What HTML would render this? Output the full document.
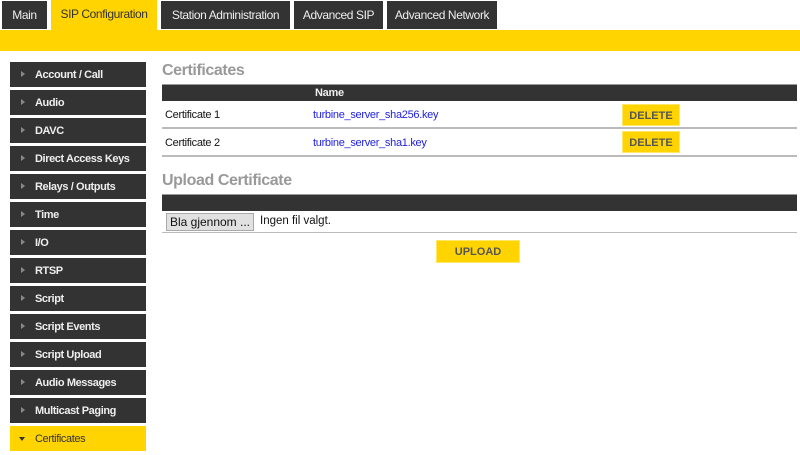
<!DOCTYPE html>
<html><head><style>
*{margin:0;padding:0;box-sizing:border-box}
body{width:800px;height:455px;background:#fff;font-family:"Liberation Sans",sans-serif;font-size:11px;letter-spacing:-0.3px;position:relative;overflow:hidden;color:#111}
.a{position:absolute}
.tab{position:absolute;top:1px;height:28px;background:#333;color:#eee;font-size:12px;line-height:29px;text-align:center;letter-spacing:-0.4px}
.tab.on{background:#ffd400;color:#333;top:0;height:30px;line-height:29px}
.side{position:absolute;left:10px;width:136px;height:25px;background:#333;color:#eee;font-weight:bold;font-size:11px;line-height:27px;padding-left:25px;letter-spacing:-0.4px}
.side:before{content:"";position:absolute;left:11px;top:9px;border-left:4px solid #888;border-top:3.5px solid transparent;border-bottom:3.5px solid transparent}
.side.on{background:#ffd400;color:#333;font-weight:normal}
.side.on:before{left:9px;top:11px;border-top:4px solid #333;border-left:3.5px solid transparent;border-right:3.5px solid transparent;border-bottom:0}
h2{position:absolute;left:162px;color:#999;font-size:16px;font-weight:bold;letter-spacing:-0.4px}
.row{position:absolute;left:162px;width:635px;border-bottom:2px solid #bbb}
.btn{position:absolute;background:#ffd400;color:#555;font-size:11px;font-weight:bold;text-align:center;border:1px solid #ffe866;letter-spacing:0}
.lnk{color:#2222dd}
</style></head><body>
<div class="tab" style="left:2px;width:45px">Main</div>
<div class="tab on" style="left:51px;width:106px">SIP Configuration</div>
<div class="tab" style="left:161px;width:129px">Station Administration</div>
<div class="tab" style="left:294px;width:89px">Advanced SIP</div>
<div class="tab" style="left:387px;width:110px">Advanced Network</div>
<div class="a" style="left:0;top:30px;width:800px;height:21px;background:#ffd400"></div>

<div class="side" style="top:62px">Account / Call</div>
<div class="side" style="top:90px">Audio</div>
<div class="side" style="top:118px">DAVC</div>
<div class="side" style="top:146px">Direct Access Keys</div>
<div class="side" style="top:174px">Relays / Outputs</div>
<div class="side" style="top:202px">Time</div>
<div class="side" style="top:230px">I/O</div>
<div class="side" style="top:258px">RTSP</div>
<div class="side" style="top:286px">Script</div>
<div class="side" style="top:314px">Script Events</div>
<div class="side" style="top:342px">Script Upload</div>
<div class="side" style="top:370px">Audio Messages</div>
<div class="side" style="top:398px">Multicast Paging</div>
<div class="side on" style="top:426px">Certificates</div>

<h2 style="top:62px">Certificates</h2>
<div class="a" style="left:162px;top:84px;width:635px;height:17px;background:#333;color:#eee;font-weight:bold;border-top:1px solid #999;line-height:17px"><span style="position:absolute;left:153px">Name</span></div>
<div class="row" style="top:101px;height:28px"><span class="a" style="left:3px;top:8px">Certificate 1</span><span class="a lnk" style="left:151px;top:8px">turbine_server_sha256.key</span></div>
<div class="btn" style="left:622px;top:104px;width:58px;height:22px;line-height:22px">DELETE</div>
<div class="row" style="top:129px;height:28px"><span class="a" style="left:3px;top:8px">Certificate 2</span><span class="a lnk" style="left:151px;top:8px">turbine_server_sha1.key</span></div>
<div class="btn" style="left:622px;top:131px;width:58px;height:22px;line-height:22px">DELETE</div>

<h2 style="top:172px">Upload Certificate</h2>
<div class="a" style="left:162px;top:194px;width:635px;height:17px;background:#333;border-top:1px solid #999"></div>
<div class="row" style="top:211px;height:22px;border-bottom:1px solid #bbb">
<span class="a" style="left:4px;top:2px;width:88px;height:18px;background:#e1e1e1;border:1px solid #aaa;text-align:center;line-height:17px;font-size:12px;letter-spacing:0">Bla gjennom ...</span>
<span class="a" style="left:98px;top:4px;font-size:11.5px;letter-spacing:0">Ingen fil valgt.</span></div>
<div class="btn" style="left:436px;top:240px;width:84px;height:23px;line-height:23px">UPLOAD</div>
</body></html>
